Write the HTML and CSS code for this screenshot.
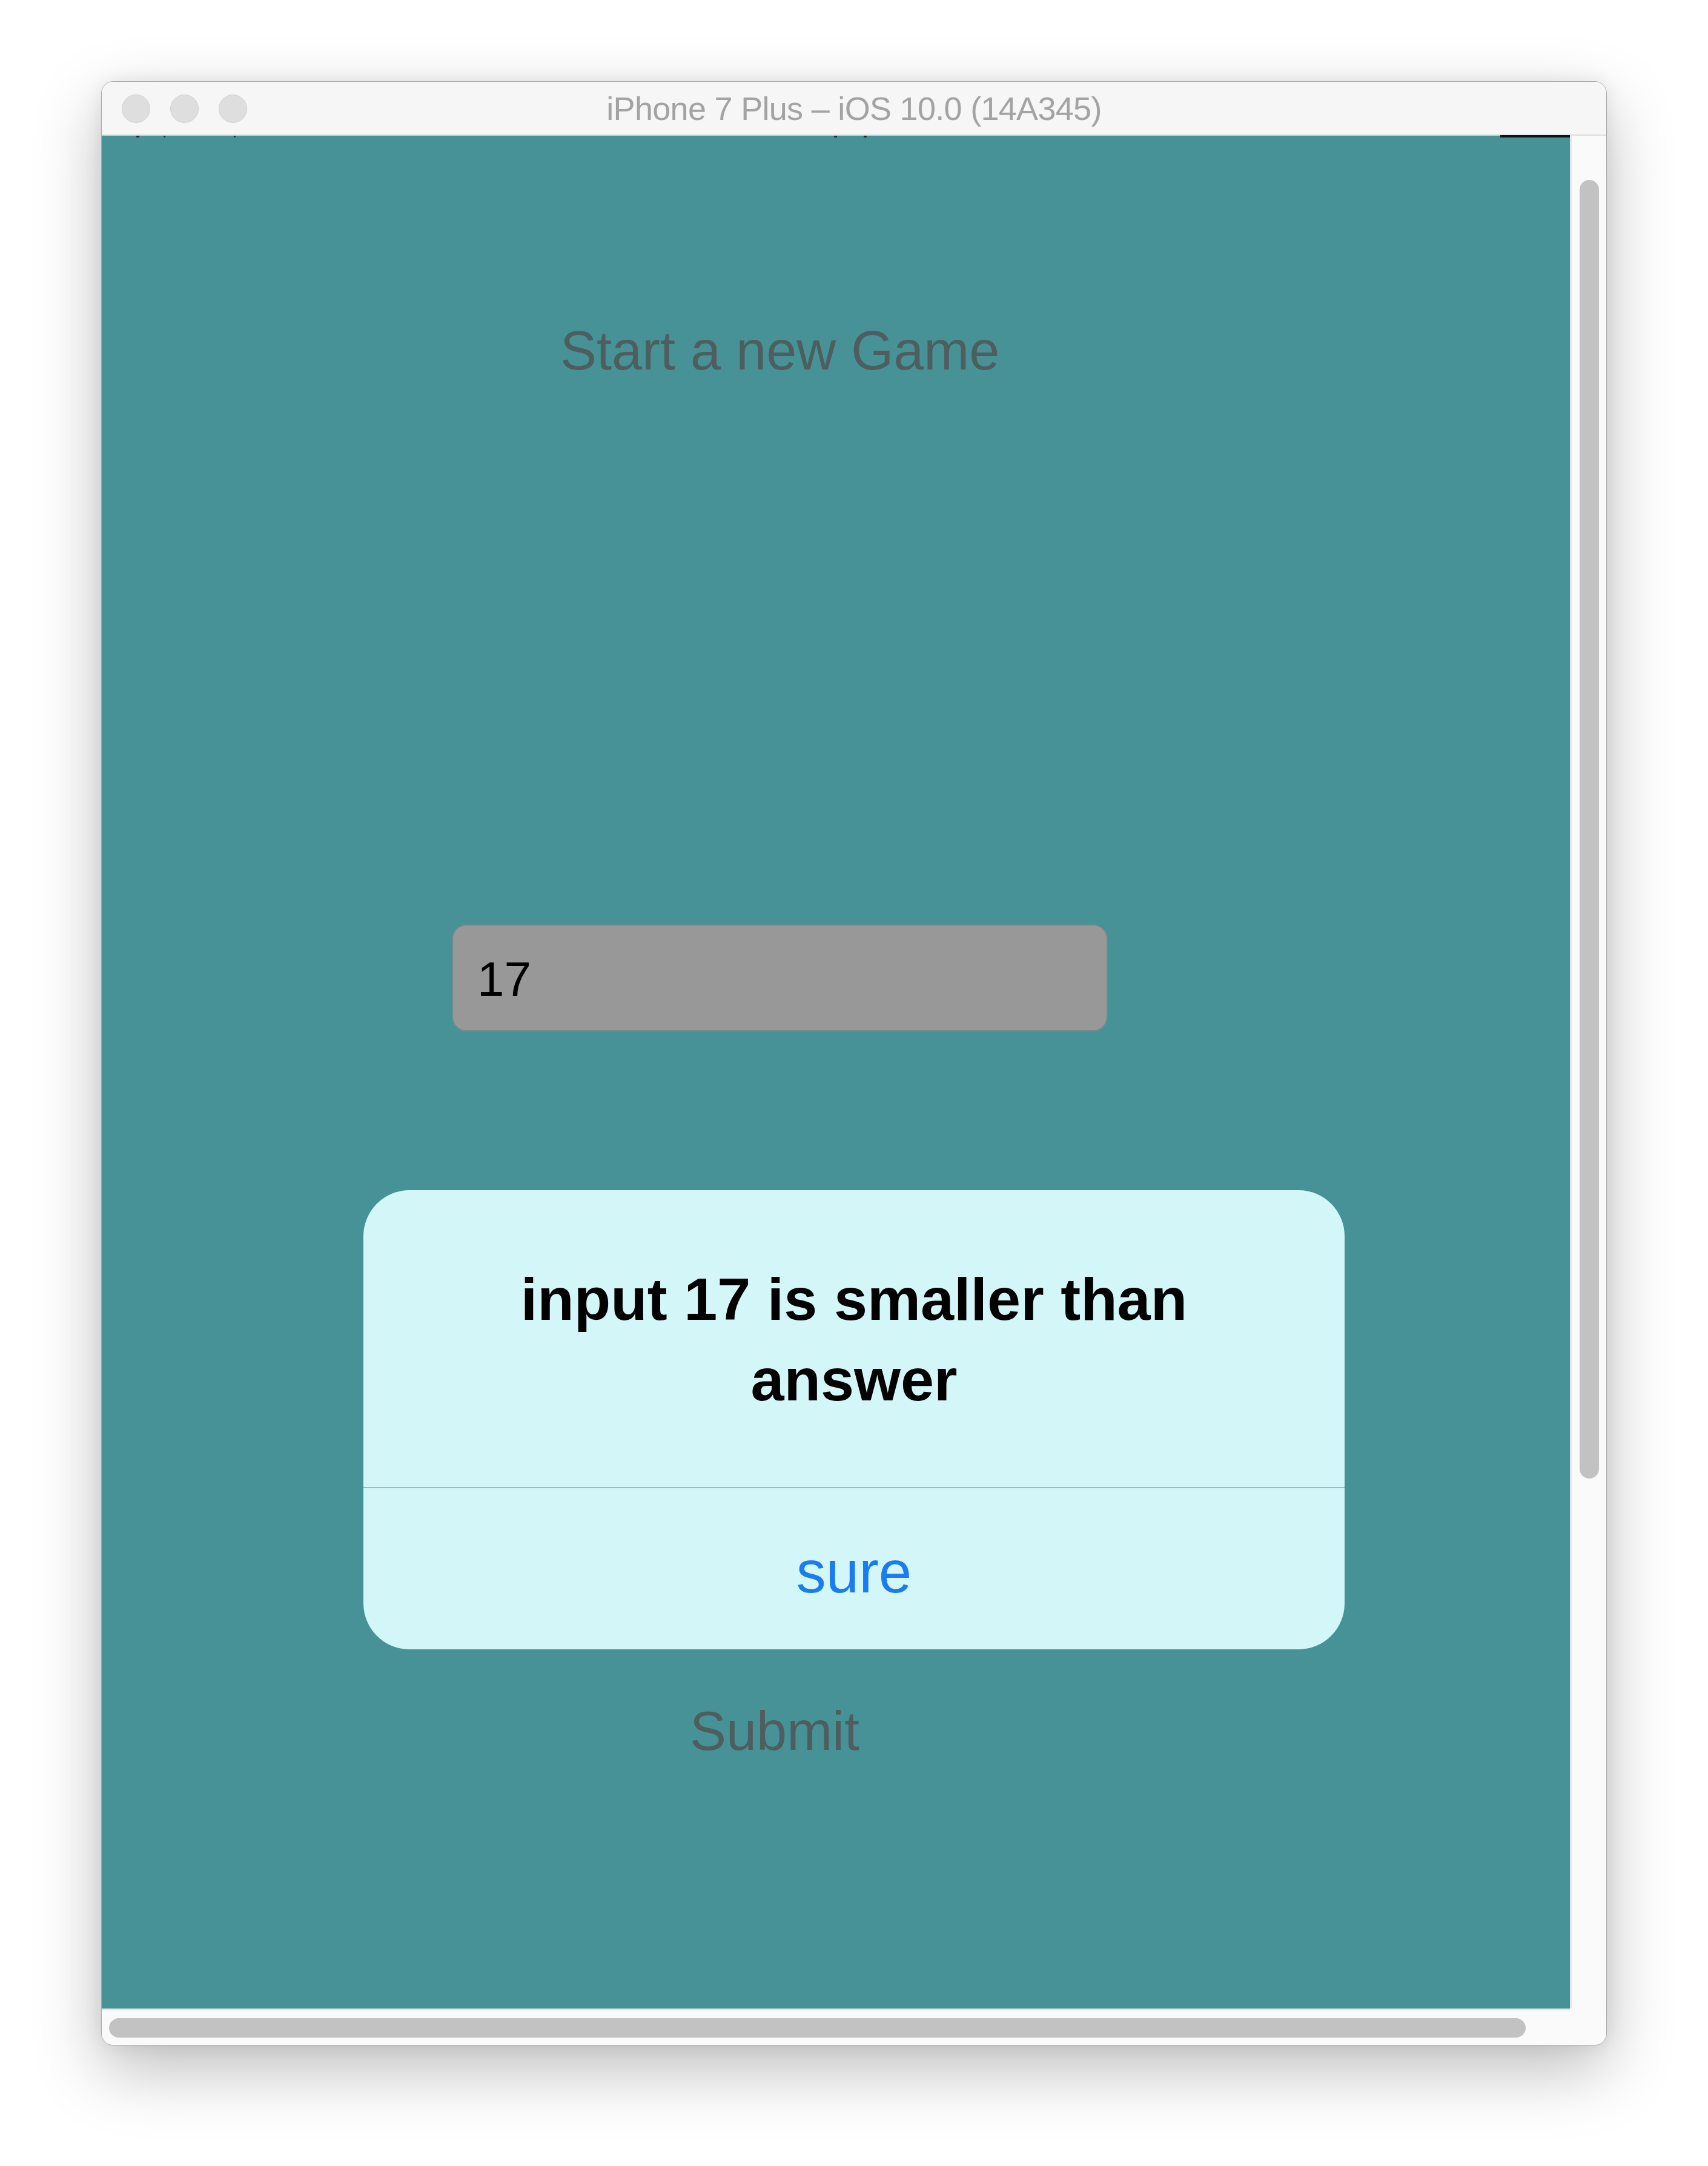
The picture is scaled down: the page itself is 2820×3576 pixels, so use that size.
FILE: index.html
```html
<!DOCTYPE html>
<html lang="en">
<head>
<meta charset="utf-8">
<title>iPhone 7 Plus – iOS 10.0 (14A345)</title>
<link rel="stylesheet" href="styles.css">
</head>
<body>
<div class="window">
  <div class="titlebar">
    <div class="lights">
      <span class="light"></span>
      <span class="light"></span>
      <span class="light"></span>
    </div>
    <div class="title">iPhone 7 Plus – iOS 10.0 (14A345)</div>
  </div>
  <div class="body-row">
    <div class="screen">
      <div class="statusbar">
        <span class="speck s1"></span>
        <span class="speck s2"></span>
        <span class="speck s3"></span>
        <span class="speck s4"></span>
        <span class="speck s5"></span>
        <span class="battery"></span>
      </div>
      <div class="heading">Start a new Game</div>
      <div class="field">17</div>
      <div class="submit">Submit</div>
      <div class="alert">
        <div class="alert-msg">input 17 is smaller than answer</div>
        <div class="alert-btn">sure</div>
      </div>
    </div>
    <div class="vtrack"><div class="vthumb"></div></div>
  </div>
  <div class="hrow">
    <div class="htrack"><div class="hthumb"></div></div>
    <div class="corner"></div>
  </div>
</div>
</body>
</html>
```

FILE: styles.css
```css
html, body {
  margin: 0;
  padding: 0;
  background: #ffffff;
}
body {
  width: 2820px;
  height: 3576px;
  overflow: hidden;
  font-family: "Liberation Sans", Arial, sans-serif;
}
.window {
  box-sizing: border-box;
  margin: 134px 0 0 167px;
  width: 2486px;
  height: 3243px;
  border: 1px solid #a8a8a8;
  border-radius: 20px;
  overflow: hidden;
  background: #fafafa;
  box-shadow: 0 40px 110px rgba(0, 0, 0, 0.26), 0 0 30px rgba(0, 0, 0, 0.08);
  display: flex;
  flex-direction: column;
}
.titlebar {
  height: 87px;
  flex: none;
  background: #f6f6f6;
  border-bottom: 2px solid #dcdcdc;
  display: flex;
  align-items: center;
  position: relative;
}
.lights {
  display: flex;
  gap: 33px;
  padding-left: 33px;
  padding-top: 2px;
}
.light {
  width: 45px;
  height: 45px;
  border-radius: 50%;
  background: #dedede;
  border: 1px solid #d0d0d0;
}
.title {
  position: absolute;
  left: 0;
  right: 0;
  top: 14px;
  text-align: center;
  font-size: 54px;
  letter-spacing: -0.7px;
  color: #a3a3a3;
  line-height: 60px;
}
.body-row {
  display: flex;
  height: 3092px;
  flex: none;
}
.screen {
  position: relative;
  width: 2424px;
  flex: none;
  background: #479297;
  padding-top: 305px;
  box-sizing: border-box;
}
.statusbar {
  position: absolute;
  left: 0;
  top: 0;
  right: 0;
  height: 3px;
}
.speck {
  position: absolute;
  top: 0;
  width: 5px;
  height: 3px;
  border-radius: 2px;
  background: #1d2a2b;
}
.s1 { left: 57px; }
.s2 { left: 102px; width: 3px; }
.s3 { left: 218px; width: 3px; }
.s4 { left: 1209px; }
.s5 { left: 1258px; }
.battery {
  position: absolute;
  top: -1px;
  right: 0;
  width: 115px;
  height: 4px;
  background: #111;
}
.heading {
  margin-left: 757px;
  font-size: 90px;
  line-height: 100px;
  color: #4e5e5f;
  white-space: nowrap;
}
.field {
  box-sizing: border-box;
  margin: 897px 0 0 578px;
  width: 1083px;
  height: 177px;
  background: #989898;
  border: 2px solid #6e8b8e;
  border-radius: 24px;
  display: flex;
  align-items: center;
  padding: 4px 0 0 40px;
  font-size: 80px;
  color: #000;
}
.submit {
  margin: 1105px 0 0 971px;
  font-size: 90px;
  line-height: 100px;
  color: #4e5e5f;
  white-space: nowrap;
}
.alert {
  position: absolute;
  left: 432px;
  top: 1741px;
  width: 1620px;
  height: 758px;
  background: #d3f7f8;
  border-radius: 76px;
  overflow: hidden;
  display: flex;
  flex-direction: column;
}
.alert-msg {
  box-sizing: border-box;
  height: 492px;
  flex: none;
  padding: 113px 110px 0;
  text-align: center;
  font-weight: bold;
  font-size: 99px;
  line-height: 133px;
  color: #000;
  border-bottom: 2px solid #5fd6da;
}
.alert-btn {
  flex: 1;
  display: flex;
  align-items: center;
  justify-content: center;
  font-size: 98px;
  color: #1a7cf4;
  padding-top: 10px;
}
.vtrack {
  flex: 1;
  background: #fafafa;
  border-left: 3px solid #e2e8e9;
  padding: 73px 0 0 13px;
}
.vthumb {
  width: 32px;
  height: 2144px;
  border-radius: 16px;
  background: #c2c2c2;
}
.hrow {
  display: flex;
  flex: 1;
}
.htrack {
  width: 2424px;
  flex: none;
  box-sizing: border-box;
  border-top: 3px solid #e6e6e6;
  padding: 13px 0 0 12px;
  background: #fafafa;
}
.hthumb {
  width: 2339px;
  height: 32px;
  border-radius: 16px;
  background: #c2c2c2;
}
.corner {
  flex: 1;
  background: #fafafa;
}
```
